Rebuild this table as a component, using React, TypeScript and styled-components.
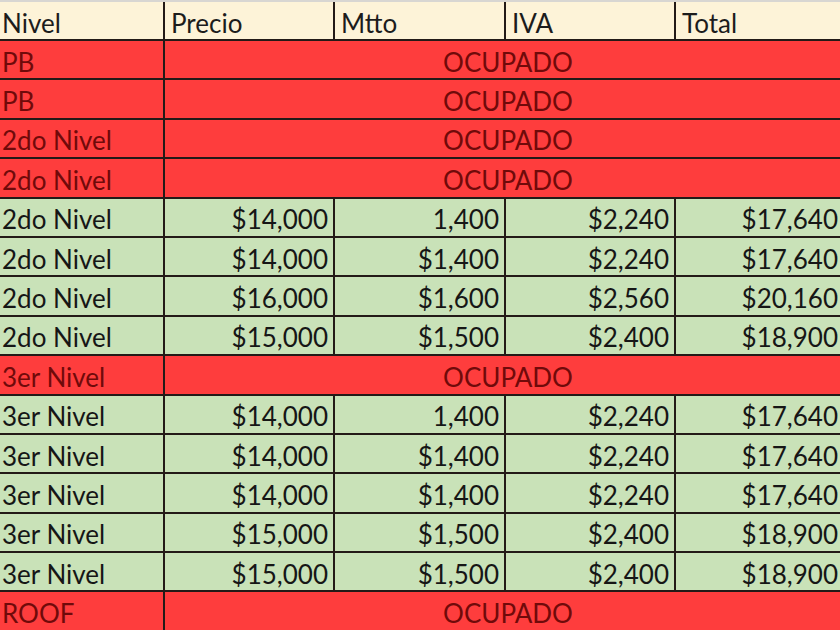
import React from "react";
import styled, { createGlobalStyle, css } from "styled-components";

const Global = createGlobalStyle`
  html, body { margin: 0; padding: 0; background: #ffffff; overflow: hidden; }
  body { font-family: Lato, "Open Sans", sans-serif; }
`;

type Tone = "head" | "busy" | "free";

const Sheet = styled.div`
  display: grid;
  grid-template-columns: 163px 168px 169px 168px 167px;
  grid-template-rows: 37px repeat(15, 37.4px);
  gap: 2px;
  width: 843px;
  height: 630px;
  background: #231a17;
  border-top: 2px solid #d8d6d2;
  box-sizing: border-box;
  font-size: 26px;
  line-height: 1;
`;

const toneStyles = {
  head: css`
    background: #fdf3d8;
    color: #1c1c1c;
  `,
  busy: css`
    background: #fe3d3d;
    color: #700a0a;
  `,
  free: css`
    background: #c9e2b8;
    color: #161616;
  `,
};

const Cell = styled.div<{ $tone: Tone }>`
  display: flex;
  align-items: center;
  padding-top: 4px;
  box-sizing: border-box;
  white-space: nowrap;
  overflow: hidden;
  ${(p) => toneStyles[p.$tone]}
`;

const HeadCell = styled(Cell)<{ $first?: boolean }>`
  padding-left: ${(p) => (p.$first ? "2px" : "6px")};
`;

const LevelCell = styled(Cell)`
  padding-left: 2px;
`;

const ValueCell = styled(Cell)`
  justify-content: flex-end;
  padding-right: 5px;
`;

const OccupiedCell = styled(Cell)`
  grid-column: span 4;
  justify-content: center;
  padding-left: 8px;
`;

type Row = { level: string; values?: [string, string, string, string] };

const rows: Row[] = [
  { level: "PB" },
  { level: "PB" },
  { level: "2do Nivel" },
  { level: "2do Nivel" },
  { level: "2do Nivel", values: ["$14,000", "1,400", "$2,240", "$17,640"] },
  { level: "2do Nivel", values: ["$14,000", "$1,400", "$2,240", "$17,640"] },
  { level: "2do Nivel", values: ["$16,000", "$1,600", "$2,560", "$20,160"] },
  { level: "2do Nivel", values: ["$15,000", "$1,500", "$2,400", "$18,900"] },
  { level: "3er Nivel" },
  { level: "3er Nivel", values: ["$14,000", "1,400", "$2,240", "$17,640"] },
  { level: "3er Nivel", values: ["$14,000", "$1,400", "$2,240", "$17,640"] },
  { level: "3er Nivel", values: ["$14,000", "$1,400", "$2,240", "$17,640"] },
  { level: "3er Nivel", values: ["$15,000", "$1,500", "$2,400", "$18,900"] },
  { level: "3er Nivel", values: ["$15,000", "$1,500", "$2,400", "$18,900"] },
  { level: "ROOF" },
];

const headers = ["Nivel", "Precio", "Mtto", "IVA", "Total"];

export default function App() {
  return (
    <>
      <Global />
      <Sheet>
        {headers.map((h, i) => (
          <HeadCell key={h} $tone="head" $first={i === 0}>
            {h}
          </HeadCell>
        ))}
        {rows.map((r, i) => {
          const tone: Tone = r.values ? "free" : "busy";
          return (
            <React.Fragment key={i}>
              <LevelCell $tone={tone}>{r.level}</LevelCell>
              {r.values ? (
                r.values.map((v, j) => (
                  <ValueCell key={j} $tone={tone}>
                    {v}
                  </ValueCell>
                ))
              ) : (
                <OccupiedCell $tone={tone}>OCUPADO</OccupiedCell>
              )}
            </React.Fragment>
          );
        })}
      </Sheet>
    </>
  );
}
